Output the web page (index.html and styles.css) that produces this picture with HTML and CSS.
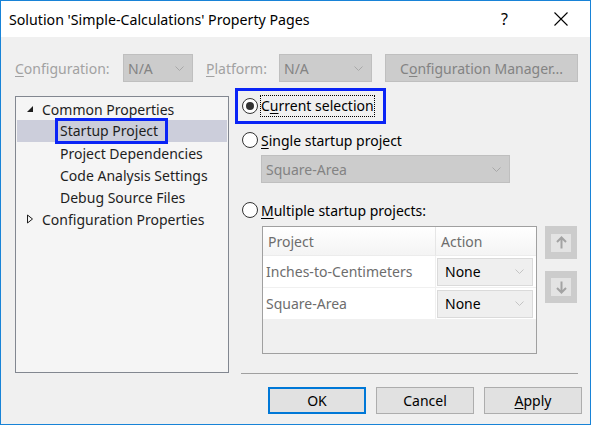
FILE: index.html
```html
<!DOCTYPE html>
<html>
<head>
<meta charset="utf-8">
<title>Property Pages</title>
<link rel="stylesheet" href="styles.css">
</head>
<body>
<div class="window">
  <div class="titlebar">
    <span class="title">Solution 'Simple-Calculations' Property Pages</span>
    <span class="help">?</span>
    <svg class="close" width="14" height="14" viewBox="0 0 14 14"><path d="M0.5 0.5 L13.5 13.5 M13.5 0.5 L0.5 13.5" stroke="#000" stroke-width="1.1" fill="none"/></svg>
  </div>

  <div class="toolbar">
    <span class="lbl lbl-config"><u>C</u>onfiguration:</span>
    <div class="combo combo-config"><span>N/A</span><svg class="chev" width="9" height="5" viewBox="0 0 9 5"><path d="M0.5 0.5 L4.5 4.5 L8.5 0.5" stroke="#a8a8a8" fill="none"/></svg></div>
    <span class="lbl lbl-platform"><u>P</u>latform:</span>
    <div class="combo combo-platform"><span>N/A</span><svg class="chev" width="9" height="5" viewBox="0 0 9 5"><path d="M0.5 0.5 L4.5 4.5 L8.5 0.5" stroke="#a8a8a8" fill="none"/></svg></div>
    <div class="btn-disabled">C<u>o</u>nfiguration Manager...</div>
  </div>

  <div class="main">
    <div class="tree">
      <div class="node">
        <svg class="tri" width="8" height="8" viewBox="0 0 8 8"><path d="M7 1 L7 7 L1 7 Z" fill="#1e1e1e"/></svg>
        <span>Common Properties</span>
      </div>
      <div class="node child selected"><span class="annot">Startup Project</span></div>
      <div class="node child"><span>Project Dependencies</span></div>
      <div class="node child"><span>Code Analysis Settings</span></div>
      <div class="node child"><span>Debug Source Files</span></div>
      <div class="node">
        <svg class="tri" width="8" height="10" viewBox="0 0 8 10"><path d="M1.5 1 L6.5 5 L1.5 9 Z" fill="none" stroke="#1e1e1e"/></svg>
        <span>Configuration Properties</span>
      </div>
    </div>

    <div class="pane">
      <div class="focus-box">
        <span class="radio checked"></span>
        <span class="radio-label focused">C<u>u</u>rrent selection</span>
      </div>
      <div class="radio-row row-single">
        <span class="radio"></span>
        <span class="radio-label"><u>S</u>ingle startup project</span>
      </div>
      <div class="combo combo-project"><span>Square-Area</span><svg class="chev" width="9" height="5" viewBox="0 0 9 5"><path d="M0.5 0.5 L4.5 4.5 L8.5 0.5" stroke="#a8a8a8" fill="none"/></svg></div>
      <div class="radio-row row-multi">
        <span class="radio"></span>
        <span class="radio-label"><u>M</u>ultiple startup projects:</span>
      </div>

      <div class="grid-area">
        <div class="grid">
          <div class="gh gh-project">Project</div>
          <div class="gh gh-action">Action</div>
          <div class="gc gc-name">Inches-to-Centimeters</div>
          <div class="gc gc-action"><div class="mini-combo"><span>None</span><svg class="chev" width="9" height="5" viewBox="0 0 9 5"><path d="M0.5 0.5 L4.5 4.5 L8.5 0.5" stroke="#c4c4c4" fill="none"/></svg></div></div>
          <div class="gc gc-name">Square-Area</div>
          <div class="gc gc-action"><div class="mini-combo"><span>None</span><svg class="chev" width="9" height="5" viewBox="0 0 9 5"><path d="M0.5 0.5 L4.5 4.5 L8.5 0.5" stroke="#c4c4c4" fill="none"/></svg></div></div>
        </div>
        <div class="movers">
          <div class="mover mover-up"><div class="mover-inner"><svg width="11" height="13" viewBox="0 0 11 13"><path d="M5.5 12.5 L5.5 1.5 M1 6 L5.5 1.5 L10 6" stroke="#a3a3a3" stroke-width="2" fill="none"/></svg></div></div>
          <div class="mover mover-down"><div class="mover-inner"><svg width="11" height="13" viewBox="0 0 11 13"><path d="M5.5 0.5 L5.5 11.5 M1 7 L5.5 11.5 L10 7" stroke="#a3a3a3" stroke-width="2" fill="none"/></svg></div></div>
        </div>
      </div>

      <div class="separator"></div>
    </div>
  </div>

  <div class="footer">
    <div class="btn btn-default">OK</div>
    <div class="btn">Cancel</div>
    <div class="btn"><u>A</u>pply</div>
  </div>
</div>
</body>
</html>
```

FILE: styles.css
```css
* { box-sizing: border-box; }
html, body { margin: 0; padding: 0; }
body {
  font-family: "Noto Sans", "Open Sans", sans-serif;
  font-size: 14px;
  color: #1e1e1e;
  background: #fff;
}
u { text-decoration: underline; text-underline-offset: 2px; text-decoration-thickness: 1px; }

.window {
  width: 591px;
  height: 425px;
  border: 1px solid #1883d7;
  background: #f0f0f0;
  display: flex;
  flex-direction: column;
  overflow: hidden;
}

/* title bar */
.titlebar {
  height: 36px;
  background: #fff;
  display: flex;
  align-items: center;
  padding-left: 8px;
  flex: none;
}
.title { flex: 1; font-size: 14.2px; color: #000; }
.help { font-size: 16px; color: #000; margin-right: 46px; }
.close { margin-right: 22px; }

/* toolbar */
.toolbar {
  margin-top: 17px;
  height: 28px;
  display: flex;
  align-items: center;
  padding-left: 14px;
  flex: none;
}
.lbl { color: #a2a2a2; }
.lbl-config { width: 108px; }
.lbl-platform { width: 73px; margin-left: 13px; }
.combo {
  height: 28px;
  background: #cccccc;
  border: 1px solid #bfbfbf;
  display: flex;
  align-items: center;
  justify-content: space-between;
  padding: 0 8px 0 4px;
  color: #838383;
}
.combo-config { width: 70px; }
.combo-platform { width: 93px; }
.btn-disabled {
  margin-left: 13px;
  width: 193px;
  height: 28px;
  background: #cccccc;
  border: 1px solid #bfbfbf;
  color: #838383;
  display: flex;
  align-items: center;
  justify-content: center;
}

/* main */
.main {
  display: flex;
  margin-top: 6px;
  height: 286px;
  flex: none;
}
.tree {
  margin-left: 14px;
  margin-top: 8px;
  width: 214px;
  height: 277px;
  border: 1px solid #828790;
  background: #f5f5f5;
  padding-top: 1px;
}
.node {
  height: 22px;
  display: flex;
  align-items: center;
  padding-left: 9px;
  margin: 0 1px;
  white-space: nowrap;
}
.tri { width: 8px; margin-right: 8px; flex: none; }
.node.child { padding-left: 43px; }
.node.selected { background: #cccedb; }
.annot {
  display: inline-block;
  line-height: 20px;
  padding: 0 7px 0 2px;
  margin-left: -2px;
  outline: 3px solid #0a24f6;
}

/* right pane */
.pane {
  margin-left: 6px;
  width: 343px;
  display: flex;
  flex-direction: column;
}
.focus-box {
  width: 151px;
  height: 36px;
  border: 3px solid #0a24f6;
  display: flex;
  align-items: center;
  padding-left: 4px;
}
.radio {
  width: 16px;
  height: 16px;
  border: 1px solid #333;
  border-radius: 50%;
  background: #fff;
  flex: none;
  position: relative;
}
.radio.checked::after {
  content: "";
  position: absolute;
  left: 3px;
  top: 3px;
  width: 8px;
  height: 8px;
  border-radius: 50%;
  background: #333;
}
.radio-label { margin-left: 3px; white-space: nowrap; color: #000; }
.radio-label.focused {
  margin-left: 2px;
  border: 1px dotted #000;
  line-height: 20px;
  padding: 0 0 0 0;
}
.radio-row {
  height: 22px;
  display: flex;
  align-items: center;
  padding-left: 7px;
}
.row-single { margin-top: 5px; }
.combo-project {
  margin-top: 4px;
  margin-left: 26px;
  width: 249px;
  height: 28px;
  padding-left: 4px;
}
.row-multi { margin-top: 16px; }

.grid-area {
  margin-top: 5px;
  margin-left: 27px;
  display: flex;
  align-items: flex-start;
}
.grid {
  width: 275px;
  height: 128px;
  border: 1px solid #a0a0a0;
  background: #f0f0f0;
  display: grid;
  grid-template-columns: 173px 1fr;
  grid-template-rows: 29px 32px 32px;
  align-content: start;
}
.gh {
  background: linear-gradient(#ffffff, #f4f4f4);
  color: #6d6d6d;
  display: flex;
  align-items: center;
  padding-left: 5px;
  border-bottom: 1px solid #ececec;
}
.gh-project { border-right: 1px solid #e6e6e6; }
.gc {
  background: #fff;
  display: flex;
  align-items: center;
  border-bottom: 1px solid #f0f0f0;
}
.gc-name { color: #6d6d6d; padding-left: 3px; border-right: 1px solid #f0f0f0; }
.gc-action { padding: 0 2px 0 1px; }
.mini-combo {
  width: 96px;
  height: 28px;
  background: #efefef;
  border: 1px solid #dadada;
  display: flex;
  align-items: center;
  justify-content: space-between;
  padding: 0 8px 0 7px;
  color: #000;
}

.movers { margin-left: 8px; display: flex; flex-direction: column; gap: 12px; }
.mover {
  width: 32px;
  height: 33px;
  background: #cccccc;
  display: flex;
  align-items: center;
  justify-content: center;
}
.mover-down { height: 32px; }
.mover-inner {
  width: 20px;
  height: 18px;
  background: #e3e3e3;
  display: flex;
  align-items: center;
  justify-content: center;
}

.separator {
  margin-top: auto;
  margin-left: 6px;
  width: 337px;
  height: 1px;
  background: #a0a0a0;
  margin-bottom: 0;
}

/* footer */
.footer {
  margin-top: 13px;
  display: flex;
  justify-content: flex-end;
  gap: 10px;
  padding-right: 8px;
}
.btn {
  width: 98px;
  height: 27px;
  background: #e1e1e1;
  border: 1px solid #adadad;
  display: flex;
  align-items: center;
  justify-content: center;
  color: #000;
}
.btn-default { border: 2px solid #0078d7; }
```
